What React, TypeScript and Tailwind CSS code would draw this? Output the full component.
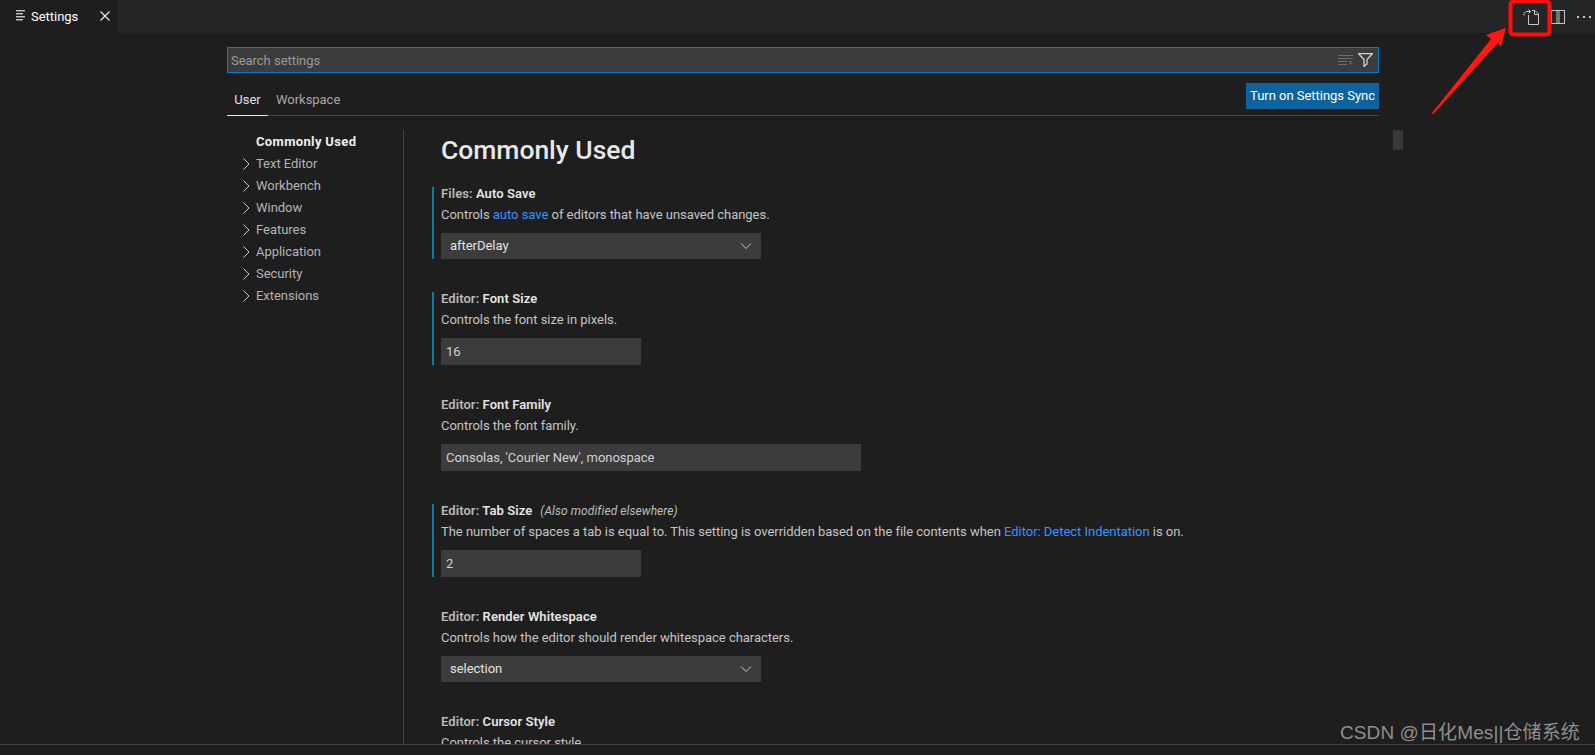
import React from "react";

const font = { fontFamily: 'Roboto, "Noto Sans CJK SC", sans-serif' };

function Chevron() {
  return (
    <svg width="16" height="16" viewBox="0 0 16 16" fill="none" stroke="#c8c8c8" strokeWidth="1" className="shrink-0">
      <path d="M4.5 2.5 10 8 4.5 13.5" />
    </svg>
  );
}

function DownChevron() {
  return (
    <svg width="16" height="16" viewBox="0 0 16 16" fill="none" stroke="#c8c8c8" strokeWidth="1">
      <path d="M3 5.5 8 10.5 13 5.5" />
    </svg>
  );
}

function Title({ cat, name, extra }: { cat: string; name: string; extra?: string }) {
  return (
    <div className="h-[12px] leading-[14px] text-[13px] font-semibold tracking-[0.08px] whitespace-nowrap">
      <span className="text-[#b8b8b8]">{cat}: </span>
      <span className="text-[#e4e4e4]">{name}</span>
      {extra && <span className="ml-2 font-normal italic text-[12px] text-[#bdbdbd]">{extra}</span>}
    </div>
  );
}

function Desc({ children }: { children: React.ReactNode }) {
  return <div className="mt-[7px] h-[18px] leading-[18px] text-[13px] text-[#c4c4c4] whitespace-nowrap">{children}</div>;
}

function Select({ value }: { value: string }) {
  return (
    <div className="mt-[9px] h-[26px] w-[320px] bg-[#3c3c3c] flex items-center justify-between pl-[9px] pr-[7px] text-[13px] text-[#e2e2e2]">
      <span>{value}</span>
      <DownChevron />
    </div>
  );
}

function Input({ value, w }: { value: string; w: string }) {
  return (
    <div className={`mt-[9px] h-[27px] ${w} bg-[#3c3c3c] flex items-center pl-[5px] text-[13px] text-[#d2d2d2] whitespace-nowrap`}>
      {value}
    </div>
  );
}

function Setting({ modified, children }: { modified?: boolean; children: React.ReactNode }) {
  return (
    <div className={`border-l-2 pl-[7px] ${modified ? "border-[#0c7d9d]" : "border-transparent"}`}>{children}</div>
  );
}

const nav = ["Text Editor", "Workbench", "Window", "Features", "Application", "Security", "Extensions"];

export default function App() {
  return (
    <div className="relative w-[1595px] h-[755px] overflow-hidden bg-[#1e1e1e] flex flex-col tracking-[-0.03px]" style={font}>
      {/* tab bar */}
      <div className="h-[33px] shrink-0 bg-[#252526] flex items-center justify-between">
        <div className="h-full w-[118px] bg-[#1e1e1e] flex items-center pl-[16px] text-[13px] text-white">
          <svg width="11" height="11" viewBox="0 0 11 11" className="shrink-0 mb-[2px]" fill="#c8c8c8">
            <rect x="0" y="0" width="9" height="1.4" />
            <rect x="0" y="3" width="7" height="1.4" />
            <rect x="0" y="6" width="9" height="1.4" />
            <rect x="0" y="9" width="7" height="1.4" />
          </svg>
          <span className="ml-[4px]">Settings</span>
          <svg width="12" height="12" viewBox="0 0 12 12" className="ml-[21px] mb-[1px]" fill="none" stroke="#e8e8e8" strokeWidth="1.2">
            <path d="M1.5 1.5 10.5 10.5M10.5 1.5 1.5 10.5" />
          </svg>
        </div>
        <div className="flex items-center pr-[4px]">
          <svg width="16" height="16" viewBox="0 0 16 16" fill="none" stroke="#c8c8c8" strokeWidth="1">
            <path d="M5.5 6V15.5H15.5V5L12 1.5H9" />
            <path d="M11.5 1.5V5.5H15.5" />
            <path d="M1 6.5V4.5L3 2.5H8" />
            <path d="M5.5 0.5 7.5 2.5 5.5 4.5" />
          </svg>
          <svg width="14" height="14" viewBox="0 0 14 14" className="ml-[12px]" fill="none" stroke="#c5c5c5" strokeWidth="1">
            <rect x="0.5" y="0.5" width="13" height="13" />
            <path d="M6 0.5V13.5M8 0.5V13.5" />
          </svg>
          <svg width="14" height="4" viewBox="0 0 14 4" className="ml-[12px]" fill="#c5c5c5">
            <rect x="0" y="1" width="2" height="2" />
            <rect x="6" y="1" width="2" height="2" />
            <rect x="12" y="1" width="2" height="2" />
          </svg>
        </div>
      </div>

      {/* settings editor */}
      <div className="flex-1 min-h-0 ml-[227px] w-[1152px] flex flex-col">
        <div className="mt-[14px] h-[26px] shrink-0 bg-[#3c3c3c] border border-[#007fd4] flex items-center justify-between pl-[3px] pr-[5px] text-[13px] text-[#9a9a9a]">
          <span className="pt-[1px]">Search settings</span>
          <div className="flex items-center gap-[5px]">
            <svg width="15" height="11" viewBox="0 0 15 11" fill="none" stroke="#6f6f6f" strokeWidth="1">
              <path d="M0 0.5H15M0 3.5H15M0 6.5H9M0 9.5H9M11 6 14 9.5M14 6 11 9.5" />
            </svg>
            <svg width="15" height="14" viewBox="0 0 15 14" fill="none" stroke="#d0d0d0" strokeWidth="1.3">
              <path d="M0.7 0.7H14.3L9 6.5V11L6 13.3V6.5Z" />
            </svg>
          </div>
        </div>

        <div className="mt-[10px] h-[33px] shrink-0 flex items-stretch justify-between border-b border-[#474747]">
          <div className="flex text-[13px] -mb-px">
            <div className="w-[41px] border-b border-[#e7e7e7] text-center text-[#e0e0e0] pt-[7px]">User</div>
            <div className="ml-[8px] text-[#a8a8a8] pt-[7px]">Workspace</div>
          </div>
          <div className="h-[26px] w-[133px] bg-[#0e639c] flex items-center justify-center text-[13px] text-white whitespace-nowrap">
            Turn on Settings Sync
          </div>
        </div>

        <div className="flex-1 min-h-0 flex overflow-hidden pt-[14px]">
          <div className="w-[177px] shrink-0 border-r border-[#444444] h-full pl-[12px]">
            <div className="h-[22px] leading-[22px] mt-[1px] pl-[17px] text-[13px] font-bold tracking-[0.35px] text-[#efefef]">Commonly Used</div>
            {nav.map((n) => (
              <div key={n} className="h-[22px] flex items-center text-[13px] text-[#b4b4b4]">
                <Chevron />
                <span className="ml-[1px]">{n}</span>
              </div>
            ))}
          </div>

          <div className="flex-1 min-w-0 pl-[28px] overflow-hidden">
            <div className="h-[43px] -mt-[2px] pl-[9px] leading-[43px] text-[26.5px] font-medium text-[#e8e8e8] whitespace-nowrap">Commonly Used</div>
            <div className="flex flex-col gap-[33px] mt-[16px]">
              <Setting modified>
                <Title cat="Files" name="Auto Save" />
                <Desc>
                  Controls <span className="text-[#3794ff]">auto save</span> of editors that have unsaved changes.
                </Desc>
                <Select value="afterDelay" />
              </Setting>
              <Setting modified>
                <Title cat="Editor" name="Font Size" />
                <Desc>Controls the font size in pixels.</Desc>
                <Input value="16" w="w-[200px]" />
              </Setting>
              <Setting>
                <Title cat="Editor" name="Font Family" />
                <Desc>Controls the font family.</Desc>
                <Input value="Consolas, 'Courier New', monospace" w="w-[420px]" />
              </Setting>
              <Setting modified>
                <Title cat="Editor" name="Tab Size" extra="(Also modified elsewhere)" />
                <Desc>
                  The number of spaces a tab is equal to. This setting is overridden based on the file contents when{" "}
                  <span className="text-[#3794ff]">Editor: Detect Indentation</span> is on.
                </Desc>
                <Input value="2" w="w-[200px]" />
              </Setting>
              <Setting>
                <Title cat="Editor" name="Render Whitespace" />
                <Desc>Controls how the editor should render whitespace characters.</Desc>
                <Select value="selection" />
              </Setting>
              <Setting>
                <Title cat="Editor" name="Cursor Style" />
                <Desc>Controls the cursor style.</Desc>
              </Setting>
            </div>
          </div>
        </div>
      </div>

      {/* bottom strip */}
      <div className="h-[11px] shrink-0 border-t border-[#444444] bg-[#1e1e1e]" />

      {/* scrollbar thumb */}
      <div className="absolute left-[1393px] top-[130px] w-[10px] h-[20px] bg-[#383838]" />

      {/* annotation overlay */}
      <svg className="absolute left-0 top-0 pointer-events-none" width="1595" height="755" fill="none">
        <rect x="1510.5" y="1.5" width="39" height="33" rx="3" stroke="#fb0f0f" strokeWidth="4" />
        <path d="M1432 113 1433 114.5 1498 43 1501 47 1506 28 1486 35 1491 39Z" fill="#fb1a12" />
      </svg>

      {/* watermark */}
      <div className="absolute left-[1340px] top-[720px] text-[19px] leading-[26px] tracking-[0.1px] text-[#8f8f8f] whitespace-nowrap" style={{ fontFamily: '"Liberation Sans", "Noto Sans CJK SC", sans-serif' }}>
        CSDN @日化Mes||仓储系统
      </div>
    </div>
  );
}
